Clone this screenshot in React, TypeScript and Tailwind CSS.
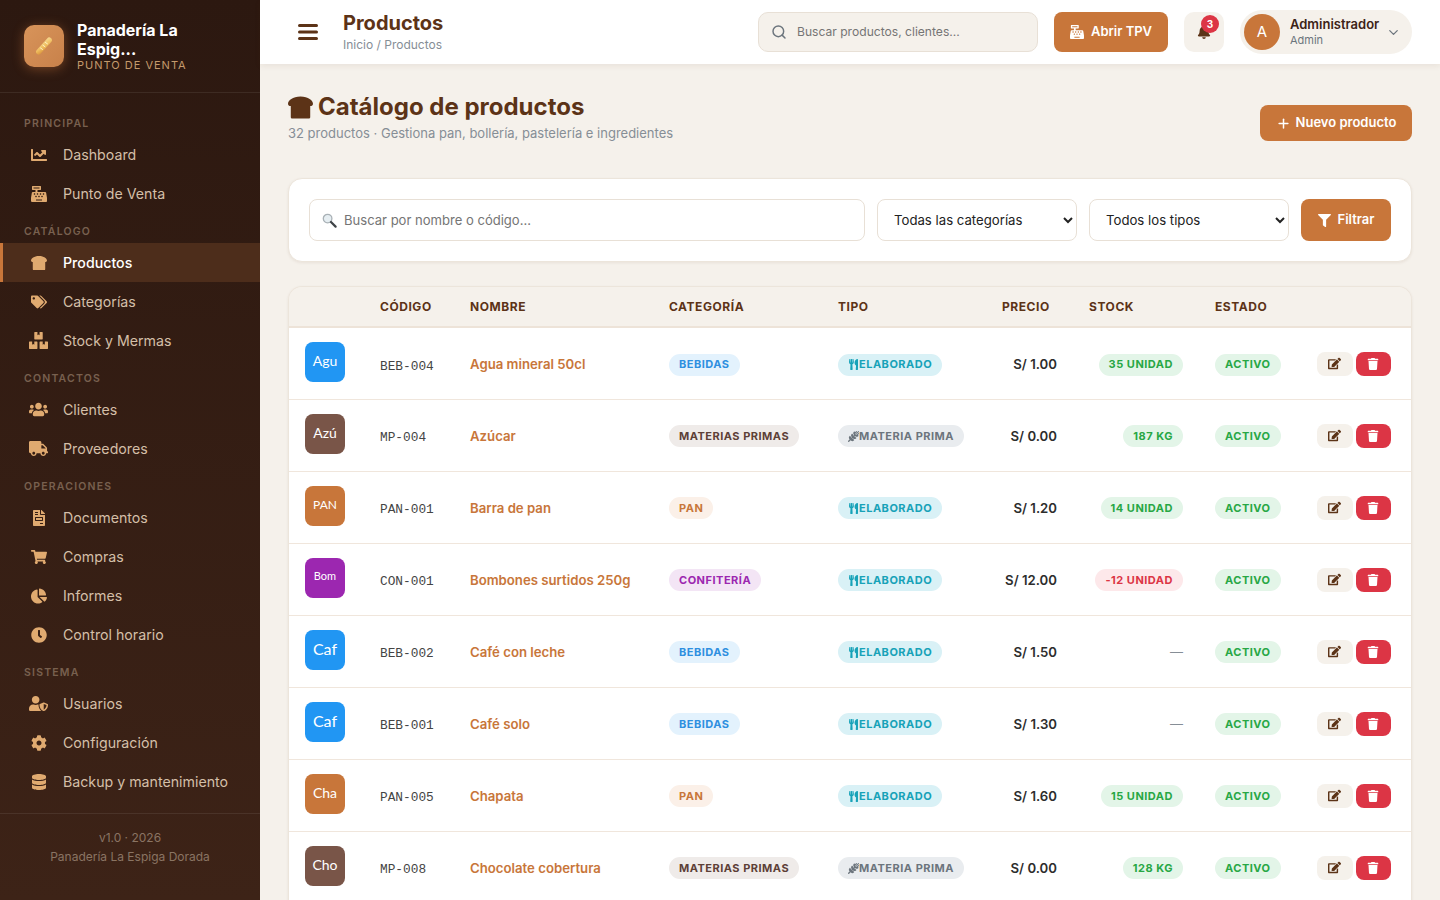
import React from "react";
import { ChevronDown, Search, Plus } from "lucide-react";
import {
  FaBell, FaBoxes, FaBreadSlice, FaCashRegister, FaChartLine, FaChartPie, FaClock, FaCog, FaDatabase,
  FaEdit, FaFileInvoice, FaFilter, FaShoppingCart, FaTags, FaTrash, FaTruck, FaUserShield, FaUsers, FaUtensils,
} from "react-icons/fa";
import { FaWheatAwn } from "react-icons/fa6";

const nav = [
  { title: "PRINCIPAL", items: [["Dashboard", FaChartLine], ["Punto de Venta", FaCashRegister]] },
  { title: "CATÁLOGO", items: [["Productos", FaBreadSlice], ["Categorías", FaTags], ["Stock y Mermas", FaBoxes]] },
  { title: "CONTACTOS", items: [["Clientes", FaUsers], ["Proveedores", FaTruck]] },
  { title: "OPERACIONES", items: [["Documentos", FaFileInvoice], ["Compras", FaShoppingCart], ["Informes", FaChartPie], ["Control horario", FaClock]] },
  { title: "SISTEMA", items: [["Usuarios", FaUserShield], ["Configuración", FaCog], ["Backup y mantenimiento", FaDatabase]] },
] as const;

const avatarStyles: Record<string, string> = {
  blue: "bg-[#2196f3]",
  brown: "bg-[#795548]",
  orange: "bg-[#c8763a]",
  purple: "bg-[#9c27b0]",
};

const catStyles: Record<string, string> = {
  BEBIDAS: "bg-[#e3f2fd] text-[#2e8fe0]",
  "MATERIAS PRIMAS": "bg-[#efebe9] text-[#5d4037]",
  PAN: "bg-[#fbf0e8] text-[#c8763a]",
  "CONFITERÍA": "bg-[#f3e5f5] text-[#9c27b0]",
};

const rows = [
  { a: "Agu", c: "blue", s: "text-[14px]", code: "BEB-004", name: "Agua mineral 50cl", cat: "BEBIDAS", el: true, price: "S/ 1.00", stock: "35 UNIDAD" },
  { a: "Azú", c: "brown", s: "text-[14px]", code: "MP-004", name: "Azúcar", cat: "MATERIAS PRIMAS", el: false, price: "S/ 0.00", stock: "187 KG" },
  { a: "PAN", c: "orange", s: "text-[12px]", code: "PAN-001", name: "Barra de pan", cat: "PAN", el: true, price: "S/ 1.20", stock: "14 UNIDAD" },
  { a: "Bom", c: "purple", s: "text-[11px]", code: "CON-001", name: "Bombones surtidos 250g", cat: "CONFITERÍA", el: true, price: "S/ 12.00", stock: "-12 UNIDAD", neg: true },
  { a: "Caf", c: "blue", s: "text-[16px]", code: "BEB-002", name: "Café con leche", cat: "BEBIDAS", el: true, price: "S/ 1.50", stock: "" },
  { a: "Caf", c: "blue", s: "text-[16px]", code: "BEB-001", name: "Café solo", cat: "BEBIDAS", el: true, price: "S/ 1.30", stock: "" },
  { a: "Cha", c: "orange", s: "text-[14px]", code: "PAN-005", name: "Chapata", cat: "PAN", el: true, price: "S/ 1.60", stock: "15 UNIDAD" },
  { a: "Cho", c: "brown", s: "text-[14px]", code: "MP-008", name: "Chocolate cobertura", cat: "MATERIAS PRIMAS", el: false, price: "S/ 0.00", stock: "128 KG" },
];

const badge = "inline-flex items-center align-middle h-[22px] rounded-full px-[10px] text-[11px] font-bold tracking-[0.5px] whitespace-nowrap";

function Baguette() {
  return (
    <svg width="24" height="24" viewBox="0 0 24 24">
      <defs>
        <linearGradient id="bag" x1="0" y1="0" x2="1" y2="1">
          <stop offset="0" stopColor="#f7dc94" />
          <stop offset="0.55" stopColor="#efbd5f" />
          <stop offset="1" stopColor="#d8923a" />
        </linearGradient>
      </defs>
      <rect x="9.3" y="1.5" width="5.4" height="21" rx="2.7" transform="rotate(42 12 12)" fill="url(#bag)" />
      <path d="M13.5 8.5l2 1.4M11 11.3l2 1.4M8.5 14l2 1.4" stroke="#fff2c8" strokeWidth="1" strokeLinecap="round" />
    </svg>
  );
}

function Magnifier() {
  return (
    <svg width="15" height="15" viewBox="0 0 15 15" className="shrink-0">
      <circle cx="5.6" cy="5.6" r="4.3" fill="#e6eef2" stroke="#a9b1b6" strokeWidth="1.3" />
      <path d="M9 9l4.6 4.6" stroke="#3f4448" strokeWidth="2.2" strokeLinecap="round" />
    </svg>
  );
}

function Hamburger() {
  return (
    <svg width="20" height="16" viewBox="0 0 20 16" className="shrink-0 mr-[25px] text-[#5c3317]">
      <path d="M1.5 1.5h17M1.5 8h17M1.5 14.5h17" stroke="currentColor" strokeWidth="3" strokeLinecap="round" />
    </svg>
  );
}

function Sidebar() {
  return (
    <aside className="w-[260px] h-[900px] shrink-0 flex flex-col bg-gradient-to-b from-[#2c1810] to-[#3d2317]">
      <div className="h-[93px] shrink-0 border-b border-[#ffffff14] pl-6 pr-4 flex items-center gap-[13px]">
        <div className="w-10 h-[42px] shrink-0 rounded-[10px] bg-gradient-to-br from-[#d8945a] to-[#c8814a] shadow-[0_2px_12px_rgba(200,118,58,0.45)] flex items-center justify-center">
          <Baguette />
        </div>
        <div className="min-w-0 pt-[1px]">
          <div className="text-[16px] leading-[19px] font-bold text-white">Panadería La<br />Espig...</div>
          <div className="-mt-px text-[11px] leading-[14px] tracking-[1px] text-[#c49a6c] whitespace-nowrap">PUNTO DE VENTA</div>
        </div>
      </div>
      <nav className="flex-1 pt-[12px]">
        {nav.map((section) => (
          <div key={section.title}>
            <div className="h-[30px] pl-6 pt-[12px] text-[10.5px] leading-[13px] font-semibold tracking-[1.2px] text-[#78604f]">{section.title}</div>
            {section.items.map(([label, Icon]) => {
              const active = label === "Productos";
              return (
                <div
                  key={label}
                  className={
                    active
                      ? "h-[39px] flex items-center pl-[27px] border-l-[3px] border-[#c8763a] bg-[#4d2d1b] text-white text-[14.2px] font-medium"
                      : "h-[39px] flex items-center pl-[30px] text-[#d4bfa8] text-[14.2px]"
                  }
                >
                  <span className="w-[17px] flex justify-center mr-[16px] text-[#e0aa70]">
                    <Icon size={label === "Usuarios" || label === "Clientes" || label === "Proveedores" || label === "Stock y Mermas" ? 19 : 16} className="shrink-0" />
                  </span>
                  {label}
                </div>
              );
            })}
          </div>
        ))}
      </nav>
      <div className="h-[87px] shrink-0 border-t border-[#ffffff14] pt-[14px] text-center text-[12px] leading-[19px] text-[#8a7463]">
        <div>v1.0 · 2026</div>
        <div>Panadería La Espiga Dorada</div>
      </div>
    </aside>
  );
}

function Header() {
  return (
    <header className="h-[64px] shrink-0 bg-white shadow-[0_2px_6px_rgba(92,51,23,0.08)] flex items-center pl-[38px] pr-[28px] relative z-10">
      <Hamburger />
      <div className="flex-1">
        <div className="text-[20px] leading-[24px] font-bold text-[#5c3317]">Productos</div>
        <div className="text-[12px] leading-[16px] mt-[2px] text-[#868e96]">Inicio / Productos</div>
      </div>
      <div className="w-[280px] h-10 rounded-[10px] bg-[#f5f1eb] border border-[#e8e0d6] flex items-center pl-[12px] gap-[10px]">
        <Search size={16} strokeWidth={2.2} className="text-[#6c757d]" />
        <span className="text-[12.1px] text-[#757575]">Buscar productos, clientes...</span>
      </div>
      <button className="ml-4 w-[114px] h-10 rounded-[8px] bg-[#c8763a] text-white text-[13px] font-semibold flex items-center justify-center gap-[7px]">
        <FaCashRegister size={14} /> Abrir TPV
      </button>
      <div className="ml-4 w-10 h-10 rounded-[10px] bg-[#f5f1eb] flex items-center justify-center relative">
        <FaBell size={14} className="text-[#5c3317]" />
        <span className="absolute top-[3px] right-[5px] w-[18px] h-[18px] rounded-full bg-[#dc3545] text-white text-[10px] font-bold flex items-center justify-center">3</span>
      </div>
      <div className="ml-4 w-[172px] h-[44px] rounded-full bg-[#f5f1eb] flex items-center pl-1">
        <div className="w-9 h-9 rounded-full bg-[#c8763a] text-white text-[15px] flex items-center justify-center">A</div>
        <div className="ml-[10px] flex-1 pb-[2px]">
          <div className="text-[13px] leading-[16px] font-semibold text-[#3d2317]">Administrador</div>
          <div className="text-[11px] leading-[14px] mt-[1px] text-[#6c757d]">Admin</div>
        </div>
        <ChevronDown size={15} className="text-[#6c757d] mr-[11px]" />
      </div>
    </header>
  );
}

function Row({ r }: { r: (typeof rows)[number] }) {
  return (
    <tr className="h-[72px] border-b border-[#f0e6dc] bg-white">
      <td className="pl-[16px]">
        <div className={`w-10 h-10 mb-[2px] rounded-[8px] flex items-center justify-center text-white font-['Lato',sans-serif] pb-[3px] ${avatarStyles[r.c]} ${r.s}`}>{r.a}</div>
      </td>
      <td className="pl-4 pt-[6px] font-['Liberation_Mono',monospace] text-[12.8px] text-[#444]">{r.code}</td>
      <td className="pl-4 pt-[3px] text-[13.2px] font-semibold text-[#c8763a]">{r.name}</td>
      <td className="pl-4"><span className={`${badge} ${catStyles[r.cat]}`}>{r.cat}</span></td>
      <td className="pl-4">
        {r.el ? (
          <span className={`${badge} bg-[#d9f1f6] text-[#17a2b8]`}><FaUtensils size={11} />ELABORADO</span>
        ) : (
          <span className={`${badge} bg-[#e9ecef] text-[#6c757d]`}><FaWheatAwn size={11} />MATERIA PRIMA</span>
        )}
      </td>
      <td className="pr-4 pt-[3px] text-right text-[13.2px] font-semibold text-[#2d2d2d]">{r.price}</td>
      <td className="pr-4 text-right">
        {r.stock ? (
          <span className={`${badge} ${r.neg ? "bg-[#fde8ea] text-[#dc3545]" : "bg-[#e3f5e8] text-[#28a745]"}`}>{r.stock}</span>
        ) : (
          <span className="text-[13px] text-[#868e96]">—</span>
        )}
      </td>
      <td className="pl-4"><span className={`${badge} bg-[#e3f5e8] text-[#28a745]`}>ACTIVO</span></td>
      <td className="pr-[20px] pt-[2px]">
        <div className="flex justify-end gap-[3px]">
          <button className="w-9 h-6 pr-[1px] pb-[2px] rounded-[8px] bg-[#f5f1eb] text-[#5c3317] flex items-center justify-center"><FaEdit size={13} /></button>
          <button className="w-[35px] h-6 pr-[1px] rounded-[8px] bg-[#dc3545] text-white flex items-center justify-center"><FaTrash size={12} /></button>
        </div>
      </td>
    </tr>
  );
}

export default function App() {
  const th = "text-left pl-4 text-[12px] font-bold tracking-[0.55px] text-[#5c3317]";
  return (
    <div className="w-[1440px] h-[900px] overflow-hidden flex bg-[#f5f1eb] font-['Inter',sans-serif]">
      <Sidebar />
      <div className="flex-1 min-w-0 flex flex-col">
        <Header />
        <main className="flex-1 min-h-0 overflow-hidden pt-[27px] px-[28px]">
          <div className="flex justify-between items-start">
            <div>
              <h1 className="flex items-center gap-[5px] text-[24px] leading-[32px] font-bold text-[#5c3317]">
                <FaBreadSlice size={25} />Catálogo de productos
              </h1>
              <p className="text-[13px] leading-[20px] text-[#868e96]">32 productos · Gestiona pan, bollería, pastelería e ingredientes</p>
            </div>
            <button className="mt-[14px] w-[152px] h-9 rounded-[8px] bg-[#c8763a] text-white text-[13px] font-semibold flex items-center justify-center gap-[5px]">
              <Plus size={15} strokeWidth={2.4} /> Nuevo producto
            </button>
          </div>
          <div className="mt-[35px] h-[84px] rounded-[14px] bg-white border border-[#ece5db] shadow-[0_1px_3px_rgba(92,51,23,0.08)] flex items-center gap-3 px-5">
            <div className="flex-1 h-[42px] rounded-[8px] border border-[#e8e0d6] bg-white flex items-center pl-[12px] gap-[7px]">
              <Magnifier />
              <input className="flex-1 pt-[2px] outline-none text-[13.05px] placeholder:text-[#757575]" placeholder="Buscar por nombre o código..." />
            </div>
            <select className="w-[200px] h-[42px] rounded-[8px] border border-[#e8e0d6] bg-white pl-3 text-[13.2px] text-[#222] outline-none">
              <option>Todas las categorías</option>
            </select>
            <select className="w-[200px] h-[42px] rounded-[8px] border border-[#e8e0d6] bg-white pl-3 text-[13.2px] text-[#222] outline-none">
              <option>Todos los tipos</option>
            </select>
            <button className="w-[90px] h-[42px] rounded-[8px] bg-[#c8763a] text-white text-[13px] font-semibold flex items-center justify-center gap-[7px]">
              <FaFilter size={13} /> Filtrar
            </button>
          </div>
          <div className="mt-[24px] rounded-t-[14px] border border-b-0 border-[#ece5db] overflow-hidden shadow-[0_1px_3px_rgba(92,51,23,0.08)]">
            <table className="w-full table-fixed border-collapse">
              <colgroup>
                <col className="w-[75px]" />
                <col className="w-[90px]" />
                <col className="w-[199px]" />
                <col className="w-[169px]" />
                <col className="w-[164px]" />
                <col className="w-[87px]" />
                <col className="w-[126px]" />
                <col className="w-[100px]" />
                <col />
              </colgroup>
              <thead>
                <tr className="h-[40px] bg-[#f5f1eb] border-b-2 border-[#ede3d8]">
                  <th />
                  <th className={th}>CÓDIGO</th>
                  <th className={th}>NOMBRE</th>
                  <th className={th}>CATEGORÍA</th>
                  <th className={th}>TIPO</th>
                  <th className={th}>PRECIO</th>
                  <th className={th}>STOCK</th>
                  <th className={th}>ESTADO</th>
                  <th />
                </tr>
              </thead>
              <tbody>
                {rows.map((r) => <Row key={r.code} r={r} />)}
              </tbody>
            </table>
          </div>
        </main>
      </div>
    </div>
  );
}
